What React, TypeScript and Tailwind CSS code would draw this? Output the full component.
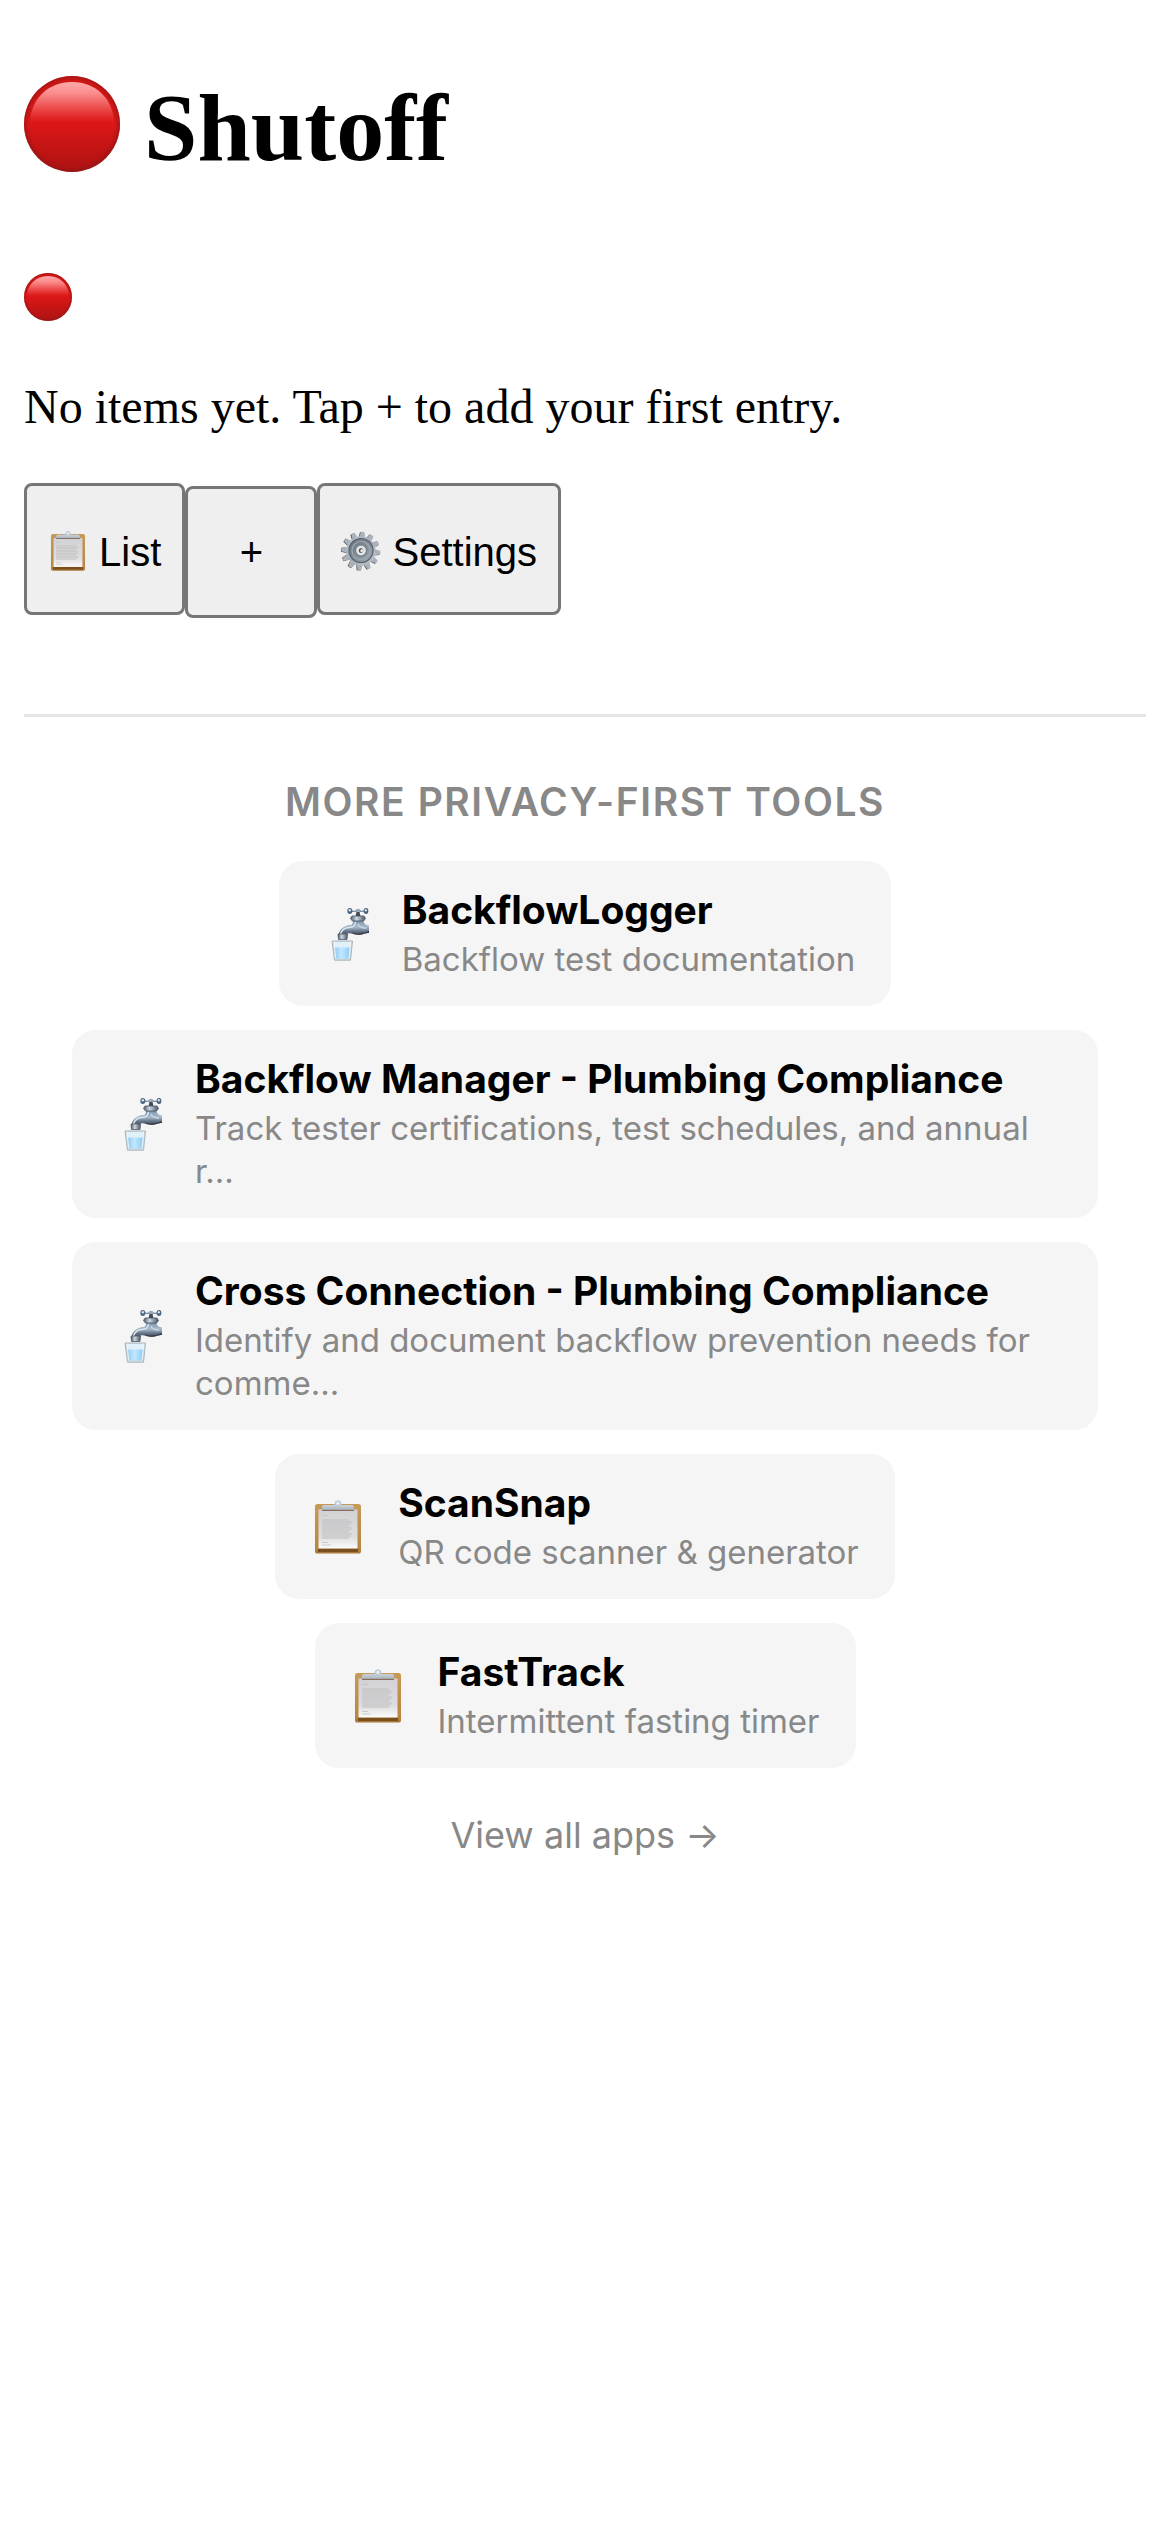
interface IconProps {
  className?: string;
}

interface Tool {
  name: string;
  description: string;
  icon: "faucet" | "clipboard";
}

const tools: Tool[] = [
  { name: "BackflowLogger", description: "Backflow test documentation", icon: "faucet" },
  {
    name: "Backflow Manager - Plumbing Compliance",
    description: "Track tester certifications, test schedules, and annual r...",
    icon: "faucet",
  },
  {
    name: "Cross Connection - Plumbing Compliance",
    description: "Identify and document backflow prevention needs for comme...",
    icon: "faucet",
  },
  { name: "ScanSnap", description: "QR code scanner & generator", icon: "clipboard" },
  { name: "FastTrack", description: "Intermittent fasting timer", icon: "clipboard" },
];

const gearTeeth = [0, 30, 60, 90, 120, 150, 180, 210, 240, 270, 300, 330];
const paperLines = [20, 22, 24, 26, 28, 30, 32, 34, 36, 38];

function RedCircle({ className }: IconProps) {
  return (
    <svg viewBox="0 0 96 96" className={className} aria-hidden="true">
      <defs>
        <linearGradient id="red-fill" x1="0" y1="0" x2="0" y2="1">
          <stop offset="0" stopColor="#d81616" />
          <stop offset="0.5" stopColor="#dc1717" />
          <stop offset="1" stopColor="#ac1212" />
        </linearGradient>
        <radialGradient id="red-edge">
          <stop offset="0.88" stopColor="#8a1515" stopOpacity="0" />
          <stop offset="1" stopColor="#8a1515" stopOpacity="0.6" />
        </radialGradient>
        <linearGradient id="red-shine" x1="0" y1="0" x2="0" y2="1">
          <stop offset="0" stopColor="#ffaaaa" />
          <stop offset="0.3" stopColor="#fb8a8a" />
          <stop offset="0.65" stopColor="#ec4c4c" />
          <stop offset="1" stopColor="#dc1717" />
        </linearGradient>
      </defs>
      <circle cx="48" cy="48" r="48" fill="url(#red-fill)" />
      <circle cx="48" cy="48" r="48" fill="url(#red-edge)" />
      <path d="M6 46C7 23 24 6 48 6s41 17 42 40z" fill="url(#red-shine)" />
    </svg>
  );
}

function Clipboard({ className }: IconProps) {
  return (
    <svg viewBox="0 0 54 54" className={className} aria-hidden="true">
      <defs>
        <linearGradient id="board" x1="0" y1="0" x2="0" y2="1">
          <stop offset="0" stopColor="#c69a57" />
          <stop offset="0.9" stopColor="#b78643" />
          <stop offset="1" stopColor="#a4753a" />
        </linearGradient>
        <linearGradient id="paper" x1="0" y1="0" x2="0" y2="1">
          <stop offset="0" stopColor="#d2d2d4" />
          <stop offset="0.7" stopColor="#dededf" />
          <stop offset="1" stopColor="#fbfbfb" />
        </linearGradient>
        <linearGradient id="clip" x1="0" y1="0" x2="0" y2="1">
          <stop offset="0" stopColor="#c9d3dd" />
          <stop offset="1" stopColor="#adb4bb" />
        </linearGradient>
      </defs>
      <rect x="4" y="4" width="46" height="49.5" rx="2.6" fill="url(#board)" />
      <path d="M7 48.5h40v3.5H7z" fill="#7a4e1d" />
      <path d="M7.5 9.5h39v39h-39z" fill="url(#paper)" />
      <path d="M11 15.5h6M11 42.5h6M11 45h9" stroke="#c2c2c4" strokeWidth="0.8" />
      {paperLines.map((y, i) => (
        <path
          key={y}
          d={i % 3 === 0 ? "M11 0h27" : i % 3 === 1 ? "M11 0h30" : "M11 0h29"}
          transform={`translate(0 ${y})`}
          stroke="#c2c2c4"
          strokeWidth="1.1"
        />
      ))}
      <path d="M11 9.5h32v1.3H11z" fill="#745448" />
      <path d="M20.5 5.5c2.4 0 3.2-1.2 3.4-2.8.3-3 5.900-3 6.200 0 .2 1.600 1 2.800 3.400 2.800z" fill="#a9c3dc" />
      <path d="M13 5h28c1.5 0 2 1 2.3 4.7H10.7C11 6 11.5 5 13 5z" fill="url(#clip)" />
      <circle cx="27" cy="3.3" r="2.2" fill="#eef1f4" stroke="#bac4ce" strokeWidth="1" />
    </svg>
  );
}

function Gear({ className }: IconProps) {
  return (
    <svg viewBox="0 0 40 40" className={className} aria-hidden="true">
      <defs>
        <linearGradient id="gear-metal" x1="0" y1="0" x2="1" y2="1">
          <stop offset="0" stopColor="#b7c5d2" />
          <stop offset="0.5" stopColor="#a6aeb8" />
          <stop offset="1" stopColor="#c0c5cc" />
        </linearGradient>
        <linearGradient id="gear-dish" x1="0" y1="0" x2="1" y2="1">
          <stop offset="0" stopColor="#63707c" />
          <stop offset="1" stopColor="#a0a9b1" />
        </linearGradient>
      </defs>
      <g fill="#65584f" transform="translate(-0.7 0.3)">
        {gearTeeth.map((angle) => (
          <path key={angle} d="M17 7l1-6.3h4L23 7z" transform={`rotate(${angle + 5} 20 20)`} />
        ))}
      </g>
      <g fill="url(#gear-metal)">
        {gearTeeth.map((angle) => (
          <path key={angle} d="M16.8 7.5l1.4-6.5q1.8-1.2 3.6 0l1.4 6.5z" transform={`rotate(${angle + 5} 20 20)`} />
        ))}
        <circle cx="20" cy="20" r="14.5" />
      </g>
      <circle cx="20" cy="19.5" r="12" fill="url(#gear-dish)" stroke="#59626b" strokeWidth="1.2" />
      <circle cx="20" cy="19.5" r="9" fill="none" stroke="#a2abb4" strokeWidth="1.2" />
      <circle cx="20" cy="19.5" r="6.5" fill="#7b858f" />
      <circle cx="20" cy="19.5" r="4.8" fill="#e4e8ec" />
      <ellipse cx="20" cy="19.5" rx="2.2" ry="2.6" fill="#5c4d45" />
      <ellipse cx="20.7" cy="19.8" rx="1.3" ry="1.7" fill="#ededed" />
    </svg>
  );
}

function Faucet({ className }: IconProps) {
  return (
    <svg viewBox="0 0 54 54" className={className} aria-hidden="true">
      <defs>
        <linearGradient id="chrome" x1="0" y1="0" x2="0" y2="1">
          <stop offset="0" stopColor="#7d93aa" />
          <stop offset="0.4" stopColor="#a9bccd" />
          <stop offset="0.65" stopColor="#66758a" />
          <stop offset="1" stopColor="#3b3d46" />
        </linearGradient>
        <linearGradient id="neck" x1="0" y1="0" x2="1" y2="0">
          <stop offset="0" stopColor="#4c5867" />
          <stop offset="0.4" stopColor="#cdd8e3" />
          <stop offset="1" stopColor="#48525f" />
        </linearGradient>
        <linearGradient id="water" x1="0" y1="0" x2="1" y2="0">
          <stop offset="0" stopColor="#8dcaf4" />
          <stop offset="0.45" stopColor="#c3e7fd" />
          <stop offset="1" stopColor="#8acbf6" />
        </linearGradient>
      </defs>
      {/* Handle */}
      <path d="M35 2.8q4 2 8 0 4 2 8 0v2.600q-4-1.300-8 0-4-1.300-8 0z" fill="#6d7f92" />
      <ellipse cx="34.8" cy="4" rx="2.5" ry="3" fill="#4c6480" />
      <ellipse cx="34.8" cy="3.2" rx="1.2" ry="1.3" fill="#d5e4f0" />
      <ellipse cx="51" cy="4" rx="2.4" ry="3" fill="#4c6480" />
      <ellipse cx="50.8" cy="3.2" rx="1.1" ry="1.3" fill="#d5e4f0" />
      <ellipse cx="43" cy="3.7" rx="2.5" ry="2" fill="#97a9bb" />
      <path d="M41.5 5h3l1 4.5h-5z" fill="#3f4a57" />
      {/* Body and spout */}
      <path
        d="M38 13.500h10.500c0 3.200 2 4.800 5.500 5V26c-4 0-5.500 1.700-11 1.700-5 0-7-2-10-1.200-1.500.4-2 1.500-2 3.500h-7.500c0-7.500 5-11.500 12.500-12 1.500-.2 2-2 2-4.500z"
        fill="url(#chrome)"
      />
      <path d="M25.500 27c1-4 4.500-6.500 10-6.800 3 0 4.500-2 5-5.200" fill="none" stroke="#dce8f2" strokeWidth="1.4" />
      <path d="M43 17c1 3 4 4 8 4.200" fill="none" stroke="#c7d6e3" strokeWidth="1.4" />
      <path d="M36 24.800c5 3 12 1.200 18-.8v2c-4 0-6 1.700-11 1.700-4 0-5-1.300-7-2.900z" fill="#383a43" />
      <path d="M37 9h12l1.5 2.500L48.500 14h-11L35.500 11.500z" fill="url(#neck)" stroke="#465260" strokeWidth="0.8" />
      <path d="M23 27h9.500l-.5 5.500h-8.500z" fill="url(#neck)" stroke="#535d69" strokeWidth="0.8" />
      {/* Glass of water */}
      <path d="M17 34h20.500L35.500 53.200h-16z" fill="#d0dae0" stroke="#a9b5bd" strokeWidth="1" strokeLinejoin="round" />
      <path d="M19 35h16.500l-.5 6H19.500z" fill="#e0f1fa" />
      <path d="M19.300 40.500h15.900L34 51.500H20.500z" fill="url(#water)" />
      <path d="M19 34.500l1.700 17M35.700 34.500L34 51.500" stroke="#f2f6f8" strokeWidth="0.9" />
    </svg>
  );
}

function ToolCard({ tool }: { tool: Tool }) {
  const Icon = tool.icon === "faucet" ? Faucet : Clipboard;

  return (
    <a
      href="#"
      className="flex max-w-full items-center gap-[33px] rounded-[24px] bg-[#f5f5f5] px-9 py-[25px]"
    >
      <Icon className="size-[54px] shrink-0" />
      <span className="flex min-w-0 flex-col gap-1">
        <span className="text-[39px] leading-[48px] font-bold text-black">{tool.name}</span>
        <span className="text-[33px] leading-[43px] text-[#888888]">{tool.description}</span>
      </span>
    </a>
  );
}

export default function App() {
  return (
    <div className="min-h-screen bg-white px-6 pt-[72px] pb-6 font-['Liberation_Serif',serif] text-black">
      <h1 className="text-[96px] leading-[112px] font-bold">
        <RedCircle className="inline-block size-[96px] align-[-12px]" /> Shutoff
      </h1>
      <RedCircle className="mt-[89px] size-12" />
      <p className="mt-[58px] text-[48px] leading-[56px]">
        No items yet. Tap + to add your first entry.
      </p>

      <nav className="mt-12 flex items-baseline font-['Liberation_Sans',sans-serif] text-[40px] leading-[46px]">
        <button className="h-[132px] rounded-[8px] border-3 border-[#767676] bg-[#efefef] px-[21px] pt-[6px]">
          <Clipboard className="inline-block size-10 align-[-5px]" /> List
        </button>
        <button className="h-[132px] w-[132px] rounded-[8px] border-3 border-[#767676] bg-[#efefef]">
          +
        </button>
        <button className="h-[132px] rounded-[8px] border-3 border-[#767676] bg-[#efefef] px-[21px] pt-[6px]">
          <Gear className="inline-block size-10 align-[-5px]" /> Settings
        </button>
      </nav>

      {/* Other apps */}
      <section className="mt-24 flex flex-col items-center border-t-3 border-[#e5e5e5] px-12 pt-[61px] font-['Inter',sans-serif]">
        <h2 className="text-[39px] leading-[48px] font-semibold tracking-[0.04em] text-[#888888] uppercase">
          More privacy-first tools
        </h2>
        <div className="mt-[35px] flex w-full flex-col items-center gap-6">
          {tools.map((tool) => (
            <ToolCard key={tool.name} tool={tool} />
          ))}
        </div>
        <a href="#" className="mt-[45px] text-[36px] leading-[44px] text-[#888888]">
          View all apps →
        </a>
      </section>
    </div>
  );
}
